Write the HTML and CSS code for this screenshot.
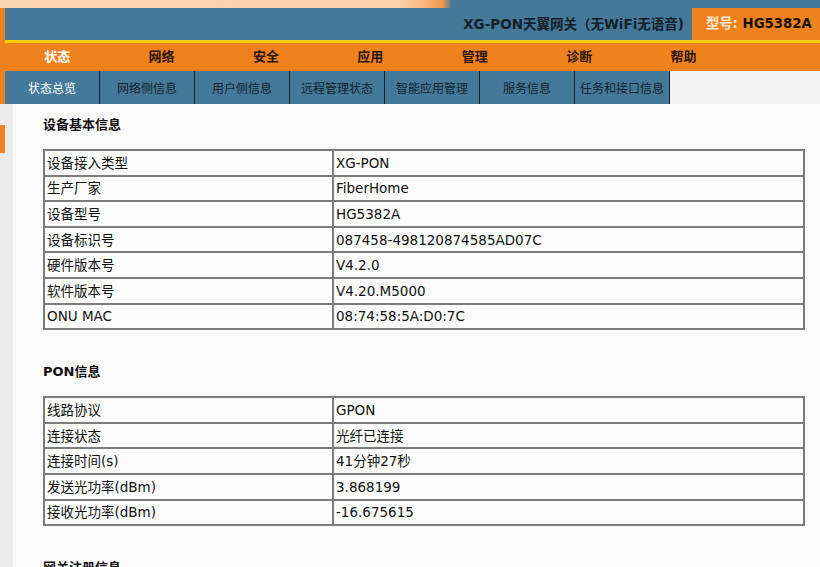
FILE: index.html
```html
<!DOCTYPE html>
<html lang="zh-CN">
<head>
<meta charset="utf-8">
<title>状态总览</title>
<link rel="stylesheet" href="styles.css">
</head>
<body>
<div class="top"></div>
<div class="head">
  <div class="brand">
    <div class="title">XG-PON天翼网关（无WiFi无语音)</div>
    <div class="model"><span class="model-k">型号:</span> <span class="model-v">HG5382A</span></div>
  </div>
  <div class="yellow"></div>
  <div class="nav">
    <div class="nav-item active">状态</div>
    <div class="nav-item">网络</div>
    <div class="nav-item">安全</div>
    <div class="nav-item">应用</div>
    <div class="nav-item">管理</div>
    <div class="nav-item">诊断</div>
    <div class="nav-item">帮助</div>
  </div>
  <div class="subnav">
    <div class="tab active">状态总览</div>
    <div class="tab">网络侧信息</div>
    <div class="tab">用户侧信息</div>
    <div class="tab">远程管理状态</div>
    <div class="tab">智能应用管理</div>
    <div class="tab">服务信息</div>
    <div class="tab">任务和接口信息</div>
    <div class="tab-fill"></div>
  </div>
</div>
<div class="page">
  <div class="side"><div class="side-mark"></div></div>
  <div class="content">
    <div class="sec-title">设备基本信息</div>
    <table class="info">
      <tr><td class="k">设备接入类型</td><td>XG-PON</td></tr>
      <tr><td class="k">生产厂家</td><td>FiberHome</td></tr>
      <tr><td class="k">设备型号</td><td>HG5382A</td></tr>
      <tr><td class="k">设备标识号</td><td>087458-498120874585AD07C</td></tr>
      <tr><td class="k">硬件版本号</td><td>V4.2.0</td></tr>
      <tr><td class="k">软件版本号</td><td>V4.20.M5000</td></tr>
      <tr><td class="k">ONU MAC</td><td>08:74:58:5A:D0:7C</td></tr>
    </table>
    <div class="sec-title">PON信息</div>
    <table class="info">
      <tr><td class="k">线路协议</td><td>GPON</td></tr>
      <tr><td class="k">连接状态</td><td>光纤已连接</td></tr>
      <tr><td class="k">连接时间(s)</td><td>41分钟27秒</td></tr>
      <tr><td class="k">发送光功率(dBm)</td><td>3.868199</td></tr>
      <tr><td class="k">接收光功率(dBm)</td><td>-16.675615</td></tr>
    </table>
    <div class="sec-title">网关注册信息</div>
  </div>
</div>
</body>
</html>
```
FILE: styles.css
```css
html, body {
  margin: 0;
  padding: 0;
}
body {
  background: #fafafa;
  font-family: "DejaVu Sans", "Noto Sans CJK SC", sans-serif;
  color: #111;
  width: 820px;
  overflow: hidden;
}
.top {
  height: 8px;
  background: linear-gradient(to right, #fbd6b4 0, #fbd2ac 400px, #f9b47a 425px, #f3984e 442px, #44799a 452px, #44799a 100%);
}
.head {
  border-left: 5px solid #f0821e;
}
.brand {
  display: flex;
  height: 32px;
  background: #44799a;
}
.title {
  flex: 1;
  text-align: right;
  padding-right: 8px;
  line-height: 32px;
  font-weight: bold;
  font-size: 13.5px;
  color: #14202a;
}
.model {
  width: 128px;
  background: #f0821e;
  line-height: 32px;
  padding-left: 14px;
  box-sizing: border-box;
  font-weight: bold;
  font-size: 13.3px;
}
.model-k {
  color: #fde7d0;
}
.model-v {
  color: #1a1208;
}
.yellow {
  height: 3px;
  background: #ffcc00;
}
.nav {
  display: flex;
  height: 28px;
  background: #f0821e;
}
.nav-item {
  width: 104.4px;
  text-align: center;
  line-height: 28px;
  font-weight: bold;
  font-size: 13px;
  color: #2a1506;
}
.nav-item.active {
  color: #ffffff;
}
.subnav {
  display: flex;
  height: 33px;
  background: #44799a;
}
.tab {
  width: 94px;
  border-right: 1px solid #16232e;
  text-align: center;
  padding-top: 4px;
  line-height: 29px;
  font-size: 12px;
  color: #14222e;
}
.tab.active {
  color: #ffffff;
}
.tab-fill {
  flex: 1;
  background: #f2f2f2;
}
.page {
  display: flex;
}
.side {
  width: 13px;
  background: #ebebeb;
  min-height: 470px;
  padding-top: 21px;
  box-sizing: border-box;
}
.side-mark {
  width: 5px;
  height: 28px;
  background: #f0821e;
}
.content {
  flex: 1;
  padding: 11px 15px 0 30px;
}
.sec-title {
  font-weight: bold;
  font-size: 13px;
  line-height: 20px;
  margin-bottom: 14px;
}
.info {
  width: 762px;
  border-collapse: collapse;
  border: 2px solid #7c7c7c;
  margin-bottom: 32px;
  font-size: 13.5px;
}
.info td {
  border: 2px solid #7c7c7c;
  height: 23.6px;
  padding: 0 0 0 2px;
  background: #fcfcfc;
  line-height: 20px;
}
.info td.k {
  width: 285px;
}
```
